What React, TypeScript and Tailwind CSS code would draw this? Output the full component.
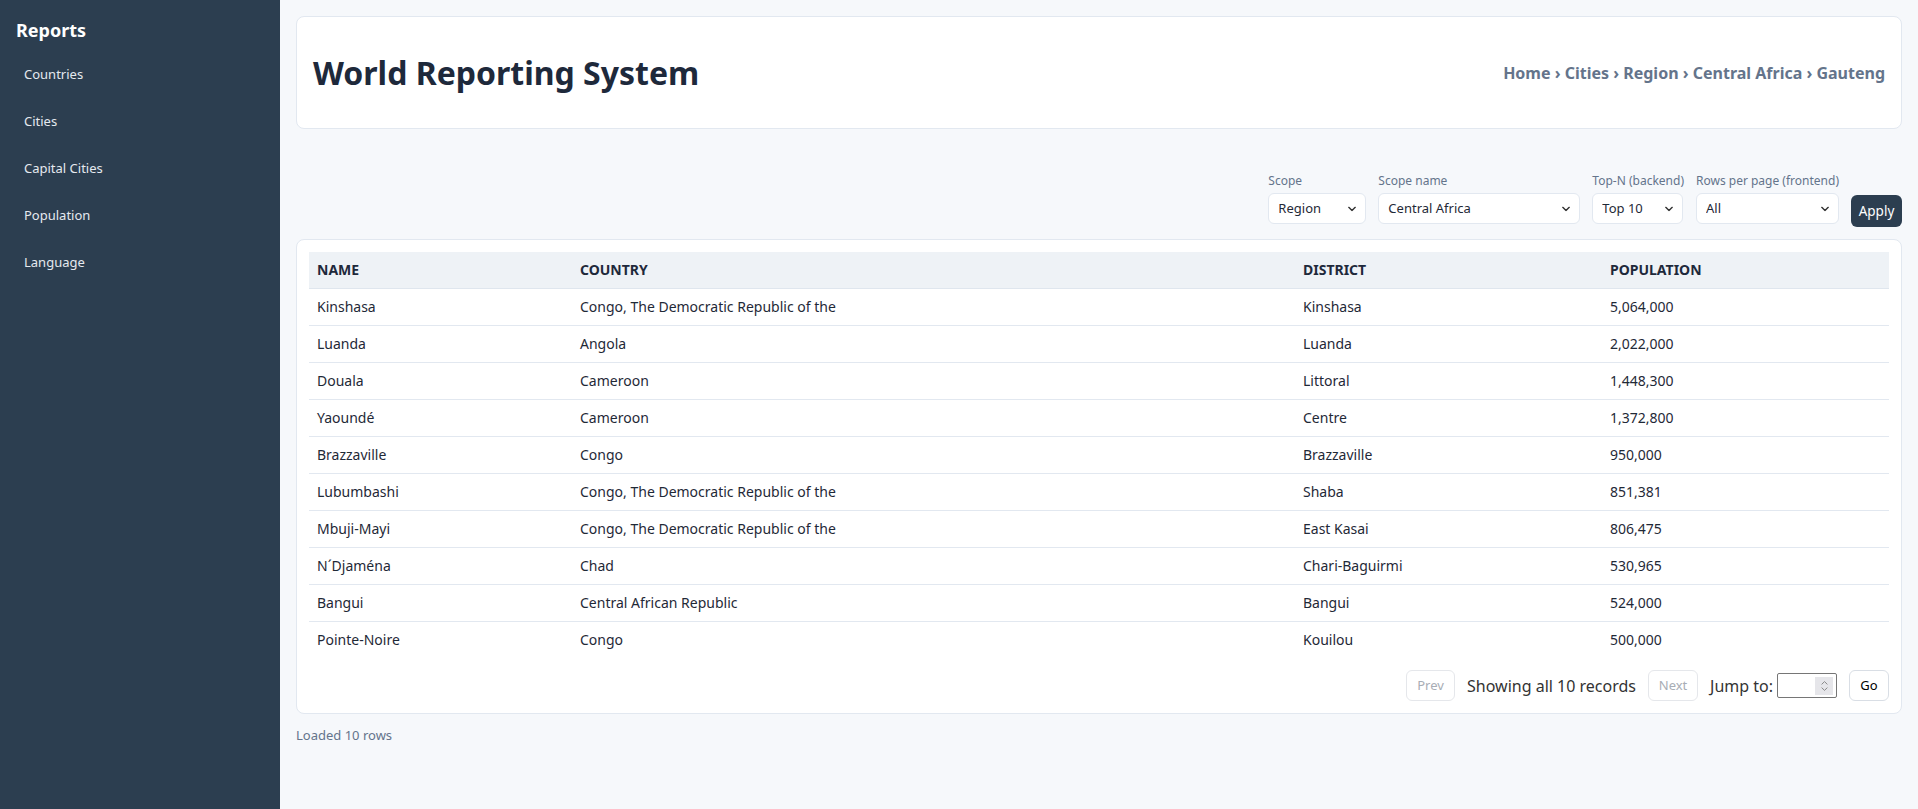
import React from "react";

const rows = [
  ["Kinshasa", "Congo, The Democratic Republic of the", "Kinshasa", "5,064,000"],
  ["Luanda", "Angola", "Luanda", "2,022,000"],
  ["Douala", "Cameroon", "Littoral", "1,448,300"],
  ["Yaoundé", "Cameroon", "Centre", "1,372,800"],
  ["Brazzaville", "Congo", "Brazzaville", "950,000"],
  ["Lubumbashi", "Congo, The Democratic Republic of the", "Shaba", "851,381"],
  ["Mbuji-Mayi", "Congo, The Democratic Republic of the", "East Kasai", "806,475"],
  ["N´Djaména", "Chad", "Chari-Baguirmi", "530,965"],
  ["Bangui", "Central African Republic", "Bangui", "524,000"],
  ["Pointe-Noire", "Congo", "Kouilou", "500,000"],
];

function Chevron() {
  return (
    <svg width="8" height="5" viewBox="0 0 8 5" className="pointer-events-none absolute right-[9px] top-1/2 -translate-y-1/2">
      <polyline points="0.8,0.8 4,4 7.2,0.8" fill="none" stroke="#333" strokeWidth="1.4" strokeLinecap="round" strokeLinejoin="round" />
    </svg>
  );
}

function SelectField({ label, value, options, width }: { label: string; value: string; options: string[]; width: string }) {
  return (
    <div className="flex flex-col gap-1">
      <label className="text-[12px] leading-4 text-[#64748b] whitespace-nowrap">{label}</label>
      <div className={`relative h-[31px] ${width} rounded-md border border-[#e2e8f0] bg-white`}>
        <select
          defaultValue={value}
          className="h-full w-full appearance-none bg-transparent pl-[9px] pr-6 text-[13px] text-[#1f2937] outline-none"
        >
          {options.map((o) => (
            <option key={o}>{o}</option>
          ))}
        </select>
        <Chevron />
      </div>
    </div>
  );
}

export default function App() {
  const nav = ["Countries", "Cities", "Capital Cities", "Population", "Language"];
  return (
    <div className="flex min-h-screen bg-[#f6f8fb] font-['Noto_Sans',sans-serif]">
      <aside className="w-[280px] shrink-0 bg-[#2c3e50] pt-4">
        <div className="px-4 text-[18px] font-bold leading-7 text-white">Reports</div>
        <nav className="mt-[7px] flex flex-col">
          {nav.map((n) => (
            <a key={n} className="flex h-[47px] items-center px-6 text-[13px] text-[#e5e9ef]">
              {n}
            </a>
          ))}
        </nav>
      </aside>

      <main className="flex-1 p-4">
        <header className="flex h-[113px] items-center justify-between rounded-lg border border-[#e2e8f0] bg-white px-4">
          <h1 className="text-[32px] font-bold leading-10 text-[#1e293b]">World Reporting System</h1>
          <div className="text-[16px] font-bold text-[#64748b]">
            Home › Cities › Region › Central Africa › Gauteng
          </div>
        </header>

        <div className="mt-[44px] flex items-end justify-end gap-3">
          <SelectField label="Scope" value="Region" options={["Country", "Region", "Continent", "World"]} width="w-[98px]" />
          <SelectField label="Scope name" value="Central Africa" options={["Central Africa", "Eastern Africa"]} width="w-[202px]" />
          <SelectField label="Top-N (backend)" value="Top 10" options={["Top 10", "Top 20", "All"]} width="w-[91px]" />
          <SelectField label="Rows per page (frontend)" value="All" options={["All", "10", "25"]} width="w-[143px]" />
          <button className="mb-[-3px] h-[32px] w-[51px] rounded-md bg-[#2c3e50] text-[13.5px] text-white">Apply</button>
        </div>

        <section className="mt-[15px] rounded-lg border border-[#e2e8f0] bg-white p-3">
          <table className="w-full table-fixed border-collapse text-left text-[14px]">
            <colgroup>
              <col className="w-[263px]" />
              <col className="w-[723px]" />
              <col className="w-[307px]" />
              <col />
            </colgroup>
            <thead>
              <tr className="border-b border-[#dfe6ee] bg-[#eef2f6]">
                {["NAME", "COUNTRY", "DISTRICT", "POPULATION"].map((h) => (
                  <th key={h} className="h-[36px] px-2 font-bold text-[#1e293b]">
                    {h}
                  </th>
                ))}
              </tr>
            </thead>
            <tbody>
              {rows.map((r, i) => (
                <tr key={i} className={i < rows.length - 1 ? "border-b border-[#e2e8f0]" : ""}>
                  {r.map((c, j) => (
                    <td key={j} className="h-[37px] px-2 text-[#1f2937]">
                      {c}
                    </td>
                  ))}
                </tr>
              ))}
            </tbody>
          </table>

          <div className="mt-3 flex items-center justify-end gap-3 text-[16px] text-[#333]">
            <button disabled className="h-[31px] w-[49px] rounded-md border border-[#e5e7eb] bg-white text-[13px] text-[#a8adb5]">
              Prev
            </button>
            <span>Showing all 10 records</span>
            <button disabled className="h-[31px] w-[50px] rounded-md border border-[#e5e7eb] bg-white text-[13px] text-[#a8adb5]">
              Next
            </button>
            <label className="flex items-center gap-1">
              Jump to:
              <span className="flex h-[25px] w-[60px] items-center rounded-[2px] border border-[#767676] bg-white pr-[3px]">
                <input type="text" className="h-full min-w-0 flex-1 bg-transparent px-1 text-[13px] outline-none" />
                <span className="flex h-[18px] w-[18px] flex-col items-center justify-center gap-[2px] bg-[#e6e6ea]">
                  <svg width="7" height="4" viewBox="0 0 7 4">
                    <polyline points="0.6,3.4 3.5,0.6 6.4,3.4" fill="none" stroke="#8a8a8a" strokeWidth="1" />
                  </svg>
                  <svg width="7" height="4" viewBox="0 0 7 4">
                    <polyline points="0.6,0.6 3.5,3.4 6.4,0.6" fill="none" stroke="#8a8a8a" strokeWidth="1" />
                  </svg>
                </span>
              </span>
            </label>
            <button className="h-[31px] w-[40px] rounded-md border border-[#d9dee5] bg-white text-[13px] text-black">Go</button>
          </div>
        </section>

        <div className="mt-3 text-[13px] text-[#64748b]">Loaded 10 rows</div>
      </main>
    </div>
  );
}
